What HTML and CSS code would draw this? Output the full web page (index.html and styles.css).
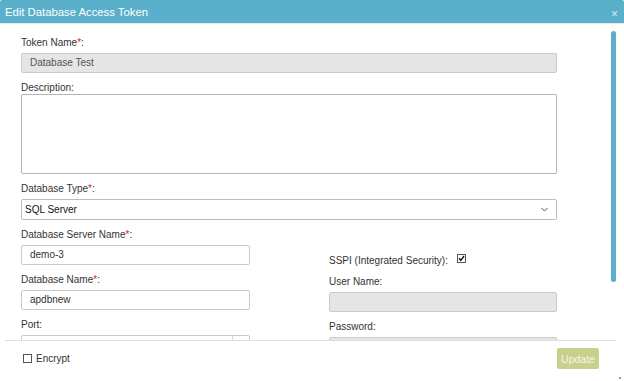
FILE: index.html
```html
<!DOCTYPE html>
<html lang="en">
<head>
  <meta charset="UTF-8" />
  <title>Edit Database Access Token</title>
  <link rel="stylesheet" href="styles.css">
</head>
<body>
  <div class="dialog">
    <div class="titlebar">
      <span class="title">Edit Database Access Token</span>
      <span class="close">&times;</span>
    </div>

    <div class="content">
      <div class="form">
        <div class="field">
          <label class="lbl">Token Name<span class="req">*</span>:</label>
          <div class="input disabled">Database Test</div>
        </div>
        <div class="field">
          <label class="lbl tight">Description:</label>
          <div class="textarea"></div>
        </div>
        <div class="field">
          <label class="lbl">Database Type<span class="req">*</span>:</label>
          <div class="select">
            <span>SQL Server</span>
            <svg class="chev" width="7" height="5" viewBox="0 0 7 5"><path d="M0.5 1 L3.5 4 L6.5 1" fill="none" stroke="#555" stroke-width="1"/></svg>
          </div>
        </div>

        <div class="cols">
          <div class="col">
            <div class="field">
              <label class="lbl">Database Server Name<span class="req">*</span>:</label>
              <div class="input">demo-3</div>
            </div>
            <div class="field">
              <label class="lbl">Database Name<span class="req">*</span>:</label>
              <div class="input">apdbnew</div>
            </div>
            <div class="field">
              <label class="lbl">Port:</label>
              <div class="input port"><span class="spin"></span></div>
            </div>
          </div>
          <div class="col right">
            <div class="check-row">
              <span>SSPI (Integrated Security):</span>
              <svg class="box" width="9" height="9" viewBox="0 0 9 9"><rect x="0.5" y="0.5" width="8" height="8" fill="#fff" stroke="#555"/><path d="M2 4.2 L3.8 6.3 L7 2" fill="none" stroke="#111" stroke-width="1.4"/></svg>
            </div>
            <div class="field">
              <label class="lbl">User Name:</label>
              <div class="input disabled"></div>
            </div>
            <div class="field">
              <label class="lbl">Password:</label>
              <div class="input disabled"></div>
            </div>
          </div>
        </div>
      </div>
      <div class="scrollbar"></div>
    </div>

    <div class="footer">
      <div class="encrypt">
        <span class="empty-box"></span>
        <span>Encrypt</span>
      </div>
      <button class="update">Update</button>
    </div>
    <span class="grip"></span>
  </div>
</body>
</html>
```

FILE: styles.css
```css
html, body {
  margin: 0;
  padding: 0;
  background: #fff;
}
body {
  font-family: "Liberation Sans", Arial, sans-serif;
  font-size: 10px;
  color: #333;
}
.dialog {
  position: relative;
  width: 624px;
  height: 381px;
  background: #fff;
  overflow: hidden;
}
.titlebar {
  height: 23px;
  background: #5aafcb;
  border-bottom: 1px solid #e8e8e8;
  display: flex;
  align-items: center;
  justify-content: space-between;
  padding: 0 6px 0 5px;
  border-radius: 2px 2px 0 0;
}
.title {
  color: #fff;
  font-size: 11.3px;
  line-height: 14px;
}
.close {
  color: #d5ebf2;
  font-size: 12px;
  line-height: 12px;
  margin-top: 4px;
}
.content {
  position: relative;
  height: 316px;
  overflow: hidden;
}
.form {
  width: 536px;
  padding: 11px 0 0 21px;
}
.field {
  margin-bottom: 7px;
}
.lbl {
  display: block;
  line-height: 14px;
  padding-top: 1px;
  margin-bottom: 3px;
  color: #333;
}
.lbl.tight {
  margin-bottom: -1px;
}
.req {
  color: #e0201a;
}
.input {
  box-sizing: border-box;
  height: 20px;
  border: 1px solid #cacaca;
  border-radius: 2px;
  padding: 0 8px;
  line-height: 18px;
  color: #333;
  background: #fff;
}
.input.disabled {
  background: #e5e5e5;
  color: #555;
}
.input.port {
  position: relative;
  height: 24px;
}
.spin {
  position: absolute;
  top: 0;
  right: 16px;
  bottom: 0;
  border-left: 1px solid #dadada;
}
.textarea {
  box-sizing: border-box;
  height: 80px;
  border: 1px solid #b4b4b4;
  border-radius: 2px;
}
.select {
  box-sizing: border-box;
  height: 21px;
  border: 1px solid #bdbdbd;
  border-radius: 2px;
  padding: 0 8px 0 3px;
  display: flex;
  align-items: center;
  justify-content: space-between;
  color: #111;
}
.chev {
  display: block;
}
.cols {
  display: flex;
  gap: 79px;
}
.col {
  width: 229px;
}
.col.right {
  width: 228px;
  padding-top: 26px;
}
.check-row {
  display: flex;
  align-items: center;
  gap: 9px;
  height: 14px;
  margin-bottom: 7px;
}
.box {
  display: block;
  margin-top: -3px;
}
.scrollbar {
  position: absolute;
  left: 611px;
  top: 7px;
  width: 5px;
  height: 251px;
  background: #5aafcb;
  border-radius: 3px;
}
.footer {
  margin: 0 8px 0 5px;
  border-top: 1px solid #dedede;
  display: flex;
  justify-content: space-between;
  align-items: center;
  padding: 7px 17px 0 18px;
}
.encrypt {
  display: flex;
  align-items: center;
  gap: 4px;
  color: #333;
}
.empty-box {
  box-sizing: border-box;
  width: 9px;
  height: 9px;
  border: 1px solid #555;
  background: #fff;
}
.update {
  box-sizing: border-box;
  width: 42px;
  height: 21px;
  border: none;
  border-radius: 2px;
  background: #c8d08c;
  color: #f4f6e4;
  font-family: "Liberation Sans", Arial, sans-serif;
  font-size: 10.5px;
  padding: 0;
}
.grip {
  position: absolute;
  right: 3px;
  bottom: 2px;
  width: 2px;
  height: 2px;
  background: #999;
}
```
